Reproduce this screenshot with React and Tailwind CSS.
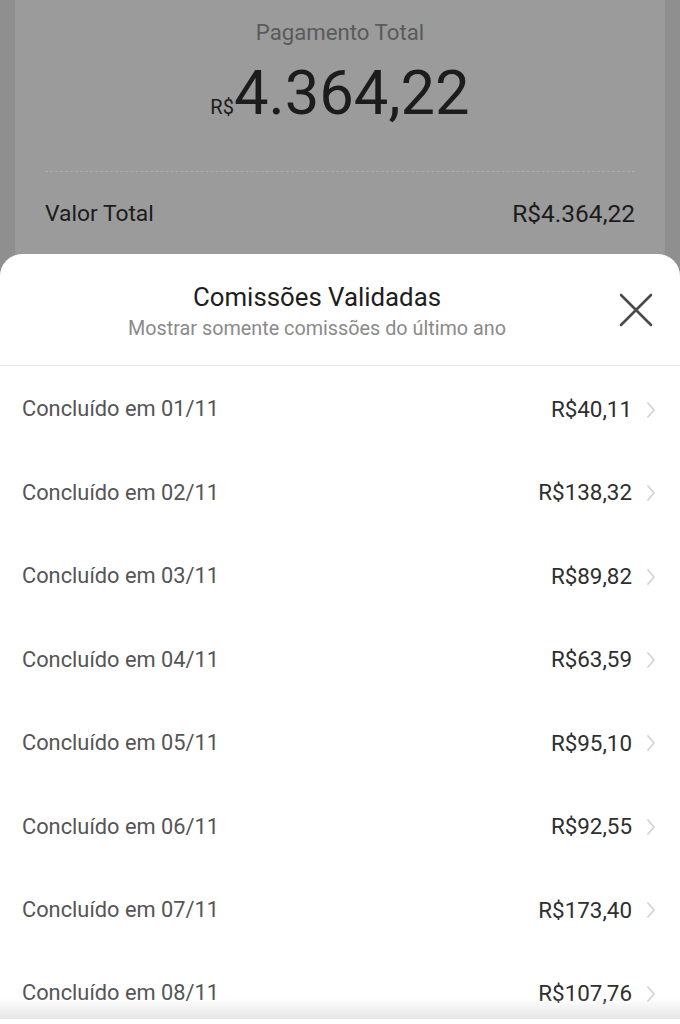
const ROWS = [
  ['01/11', 'R$40,11'],
  ['02/11', 'R$138,32'],
  ['03/11', 'R$89,82'],
  ['04/11', 'R$63,59'],
  ['05/11', 'R$95,10'],
  ['06/11', 'R$92,55'],
  ['07/11', 'R$173,40'],
  ['08/11', 'R$107,76'],
];

function Chevron() {
  return (
    <svg className="ml-[14px] shrink-0" width="10" height="18" viewBox="0 0 10 18" fill="none" stroke="#d4d4d4" strokeWidth="1.8" strokeLinecap="round" strokeLinejoin="round">
      <path d="M2 2 L8 9 L2 16" />
    </svg>
  );
}

export default function App() {
  return (
    <div className="relative h-[1024px] w-[680px] overflow-hidden bg-[#8f8f8f]" style={{ fontFamily: 'Roboto, "Liberation Sans", sans-serif' }}>
      {/* dimmed page behind the sheet */}
      <div className="mx-[15px] h-[280px] bg-[#9b9b9b] px-[30px]">
        <p className="pt-[18px] text-center text-[22.2px] leading-[28px] text-[#5a5a5a]">Pagamento Total</p>
        <div className="mt-[15px] flex items-baseline justify-center">
          <span className="text-[20px] text-[#1c1c1c]">R$</span>
          <span className="text-[61.5px] leading-[64px] text-[#1c1c1c]">4.364,22</span>
        </div>
        <div className="mt-[46px] border-t-[1.5px] border-dashed border-[#adadad]" />
        <div className="mt-[27px] flex items-center justify-between text-[22.8px] leading-[30px] text-[#1c1c1c]">
          <span>Valor Total</span>
          <span className="text-[24.5px]">R$4.364,22</span>
        </div>
      </div>

      {/* bottom sheet */}
      <div className="absolute left-0 right-0 top-[254px] bottom-0 rounded-t-[22px] bg-white">
        <div className="relative h-[112px] border-b border-[#e6e6e6]">
          <div className="pr-[46px]">
            <p className="pt-[27px] text-center text-[25.8px] leading-[32px] text-[#1e1e1e]">Comissões Validadas</p>
            <p className="mt-[3px] text-center text-[19.8px] leading-[26px] text-[#8a8a8a]">Mostrar somente comissões do último ano</p>
          </div>
          <svg className="absolute left-[619px] top-[39px]" width="34" height="34" viewBox="0 0 34 34" fill="none" stroke="#4a4a4a" strokeWidth="2.6" strokeLinecap="round">
            <path d="M2 2 L32 32 M32 2 L2 32" />
          </svg>
        </div>
        <div className="pt-[2px]">
          {ROWS.map(([d, v]) => (
            <div key={d} className="flex h-[83.45px] items-center pl-[22px] pr-[24px]">
              <span className="flex-1 text-[21.8px] text-[#555555]">Concluído em {d}</span>
              <span className="text-[22.4px] text-[#2e2e2e]">{v}</span>
              <Chevron />
            </div>
          ))}
        </div>
      </div>

      {/* bottom fade */}
      <div className="absolute bottom-[4px] left-0 right-0 h-[22px] bg-gradient-to-b from-white/0 to-[#e4e4e4]" />
      <div className="absolute bottom-0 left-0 right-0 h-[5px] bg-white" />
    </div>
  );
}
